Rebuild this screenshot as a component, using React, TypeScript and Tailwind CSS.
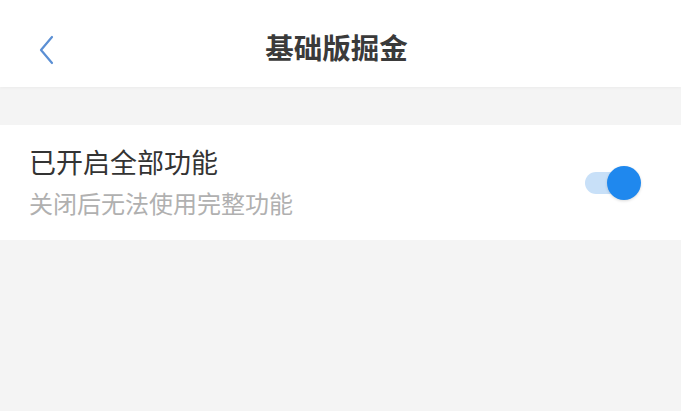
import React, { useState } from 'react'

const font = { fontFamily: '"Noto Sans CJK SC", "Noto Sans", sans-serif' }

export default function App() {
  const [enabled, setEnabled] = useState(true)

  return (
    <div className="w-[681px] h-[411px] bg-[#f4f4f4] overflow-hidden" style={font}>
      <header className="relative h-[87px] bg-white flex items-center justify-center pt-[8px] shadow-[0_1px_3px_rgba(0,0,0,0.04)]">
        <button className="absolute left-[35px] top-[34px] w-[22px] h-[32px] flex items-center justify-center">
          <svg width="18" height="30" viewBox="0 0 18 30" fill="none">
            <path d="M15 2 L4 15 L15 28" stroke="#5b8fd4" strokeWidth="2.2" strokeLinecap="round" strokeLinejoin="round" />
          </svg>
        </button>
        <h1 className="mr-[8px] text-[28.5px] font-bold text-[#3a3a3a] leading-none">基础版掘金</h1>
      </header>

      <div className="mt-[38px] h-[115px] bg-white flex items-center justify-between pl-[29px] pr-[38px]">
        <div className="flex flex-col pb-[2px]">
          <span className="text-[27px] text-[#333333] leading-none">已开启全部功能</span>
          <span className="mt-[16px] text-[24px] text-[#b0b0b0] leading-none">关闭后无法使用完整功能</span>
        </div>
        <button
          onClick={() => setEnabled(!enabled)}
          className="relative w-[58px] h-[36px] flex items-center"
        >
          <span className={`absolute left-[0px] w-[48px] h-[22px] rounded-full ${enabled ? 'bg-[#c8e0f8]' : 'bg-[#dddddd]'}`} />
          <span
            className={`absolute w-[34px] h-[34px] rounded-full shadow-[0_1px_3px_rgba(0,0,0,0.15)] ${enabled ? 'left-[22px] bg-[#1f88ee]' : 'left-[-6px] bg-[#fafafa]'}`}
          />
        </button>
      </div>
    </div>
  )
}
